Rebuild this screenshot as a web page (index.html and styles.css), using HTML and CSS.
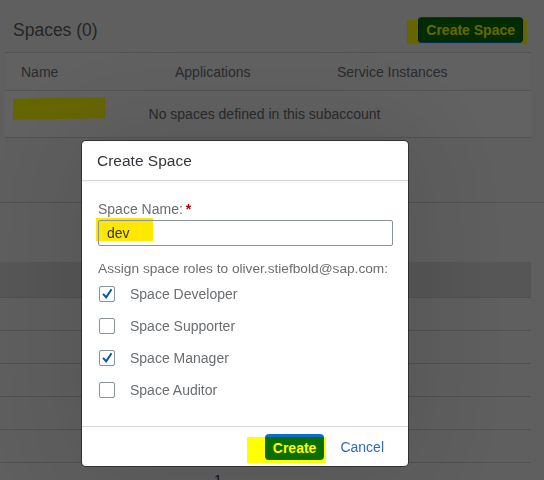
FILE: index.html
```html
<!DOCTYPE html>
<html lang="en">
<head>
<meta charset="utf-8">
<title>Spaces</title>
<link rel="stylesheet" href="styles.css">
</head>
<body>
<div class="page">
  <header class="page-head">
    <h1 class="page-title">Spaces (0)</h1>
    <span class="marked marked-top">
      <button class="btn-create-space" type="button">Create Space</button>
    </span>
  </header>

  <table class="spaces">
    <colgroup>
      <col class="c-name"><col class="c-apps"><col class="c-svc">
    </colgroup>
    <thead>
      <tr><th>Name</th><th>Applications</th><th>Service Instances</th></tr>
    </thead>
    <tbody>
      <tr><td class="no-data" colspan="3"><span class="row-mark"></span>No spaces defined in this subaccount</td></tr>
    </tbody>
  </table>

  <div class="section-gap"></div>

  <div class="list2">
    <div class="list2-head"></div>
    <div class="list2-row"></div>
    <div class="list2-row"></div>
    <div class="list2-row"></div>
    <div class="list2-row"></div>
    <div class="list2-row"></div>
  </div>
  <div class="pager">1</div>
</div>

<div class="block-layer"></div>

<div class="dialog" role="dialog" aria-labelledby="dlg-title">
  <div class="dialog-head"><h2 id="dlg-title">Create Space</h2></div>
  <div class="dialog-body">
    <label class="field-label" for="space-name">Space Name:<span class="req">*</span></label>
    <div class="input-wrap">
      <span class="input-mark"></span>
      <input id="space-name" class="input" type="text" value="dev">
    </div>
    <p class="roles-label">Assign space roles to oliver.stiefbold@sap.com:</p>
    <ul class="roles">
      <li class="role"><span class="cb checked"><svg viewBox="0 0 16 16"><polyline points="3.5,7.8 7,11.8 13.2,2.6"/></svg></span><span>Space Developer</span></li>
      <li class="role"><span class="cb"></span><span>Space Supporter</span></li>
      <li class="role"><span class="cb checked"><svg viewBox="0 0 16 16"><polyline points="3.5,7.8 7,11.8 13.2,2.6"/></svg></span><span>Space Manager</span></li>
      <li class="role"><span class="cb"></span><span>Space Auditor</span></li>
    </ul>
  </div>
  <div class="dialog-foot">
    <span class="marked marked-foot">
      <button class="btn-create" type="button">Create</button>
    </span>
    <button class="btn-cancel" type="button">Cancel</button>
  </div>
</div>
</body>
</html>
```

FILE: styles.css
```css
* { box-sizing: border-box; }

html, body {
  margin: 0;
  padding: 0;
}

body {
  width: 544px;
  height: 480px;
  overflow: hidden;
  background: #eeeeee;
  font-family: "Liberation Sans", Arial, sans-serif;
  font-size: 14px;
  color: #32363a;
}

.page {
  width: 544px;
}

/* ---------- page header ---------- */
.page-head {
  height: 52px;
  padding: 8px 21px 0 13px;
  display: flex;
  align-items: center;
  justify-content: space-between;
}

.page-title {
  margin: 0;
  font-size: 17.5px;
  font-weight: normal;
  color: #5c5e60;
  line-height: 22px;
}

.marked {
  position: relative;
  z-index: 0;
  display: inline-flex;
}

.marked::before {
  content: "";
  position: absolute;
  z-index: -1;
  background: #ffff00;
}

.marked-top::before {
  left: -11px;
  right: -4px;
  top: 3px;
  bottom: -1px;
}

.btn-create-space {
  height: 26px;
  padding: 0 7px;
  border: 1px solid #0a6ed1;
  border-left-color: #0a4a20;
  border-right-color: #0a4a20;
  border-radius: 4px;
  background: #006f00;
  color: #ffff00;
  font-family: inherit;
  font-size: 14px;
  font-weight: bold;
  line-height: 24px;
}

/* ---------- spaces table ---------- */
.spaces {
  margin-left: 5px;
  width: 526px;
  border-collapse: collapse;
  table-layout: fixed;
}

.c-name { width: 154px; }
.c-apps { width: 162px; }
.c-svc { width: 210px; }

.spaces th {
  height: 38px;
  padding: 0 0 0 16px;
  text-align: left;
  font-weight: normal;
  color: #6a6d70;
  background: #f2f2f2;
  border-top: 1px solid #cfcfcf;
  border-bottom: 1px solid #d4d4d4;
}

.spaces td {
  height: 47px;
  border-bottom: 1px solid #cfcfcf;
  background: #f4f4f4;
}

.no-data {
  position: relative;
  text-align: center;
  padding: 0 7px 0 0;
  color: #6a6d70;
}

.row-mark {
  position: absolute;
  left: 8px;
  top: 7px;
  width: 92px;
  height: 21px;
  background: #ffff00;
  transform: skewY(-1deg);
}

.section-gap {
  height: 65px;
  border-bottom: 1px solid #cacaca;
}

/* ---------- lower list ---------- */
.list2 {
  margin-top: 59px;
  width: 531px;
}

.list2-head {
  height: 36px;
  background: #d8d8d8;
  border-bottom: 1px solid #c8c8c8;
}

.list2-row {
  height: 33px;
  border-bottom: 1px solid #cbcbcb;
}

.pager {
  padding: 9px 0 0 214px;
  line-height: 16px;
  color: #32363a;
}

/* ---------- block layer ---------- */
.block-layer {
  position: fixed;
  inset: 0;
  background: rgba(0, 0, 0, 0.6);
}

/* ---------- dialog ---------- */
.dialog {
  position: fixed;
  left: 82px;
  top: 141px;
  width: 326px;
  background: #ffffff;
  border-radius: 4px;
  box-shadow: 0 0 0 1px rgba(0, 0, 0, 0.45), 0 0 110px 20px rgba(0, 0, 0, 0.12);
  overflow: hidden;
}

.dialog-head {
  height: 40px;
  padding: 0 15px;
  display: flex;
  align-items: center;
  border-bottom: 1px solid #d9d9d9;
  box-shadow: 0 1px 2px rgba(0, 0, 0, 0.06);
}

.dialog-head h2 {
  margin: 0;
  font-size: 15.5px;
  font-weight: normal;
  color: #32363a;
  line-height: 20px;
}

.dialog-body {
  padding: 19px 15px 20px 16px;
}

.field-label {
  display: block;
  line-height: 18px;
  color: #6a6d70;
}

.req {
  color: #bb0000;
  font-weight: bold;
  margin-left: 3px;
}

.input-wrap {
  position: relative;
  z-index: 0;
  margin-top: 2px;
}

.input {
  display: block;
  width: 100%;
  height: 26px;
  padding: 0 8px;
  border: 1px solid #89919a;
  border-radius: 2px;
  background: transparent;
  font-family: inherit;
  font-size: 14px;
  color: #32363a;
}

.input-mark {
  position: absolute;
  z-index: -1;
  left: -2px;
  top: -2px;
  width: 57px;
  height: 23px;
  background: #ffe800;
}

.roles-label {
  margin: 14px 0 0;
  line-height: 18px;
  font-size: 13.7px;
  white-space: nowrap;
  color: #6a6d70;
}

.roles {
  list-style: none;
  margin: 0;
  padding: 0;
}

.role {
  height: 32px;
  display: flex;
  align-items: center;
  gap: 15px;
  color: #6a6d70;
}

.cb {
  width: 16px;
  height: 16px;
  margin-left: 1px;
  border: 1px solid #89919a;
  border-radius: 2px;
  background: #ffffff;
  display: inline-flex;
}

.cb svg {
  width: 14px;
  height: 14px;
  fill: none;
  stroke: #0854a0;
  stroke-width: 2.2;
}

/* ---------- dialog footer ---------- */
.dialog-foot {
  height: 40px;
  border-top: 1px solid #d9d9d9;
  padding: 0 16px 0 0;
  display: flex;
  align-items: center;
  justify-content: flex-end;
  gap: 8px;
}

.marked-foot::before {
  left: -18px;
  right: -2px;
  top: 3px;
  bottom: -3px;
}

.btn-create {
  height: 26px;
  padding: 0 8px;
  border: none;
  border-top: 3px solid #0a6ed1;
  border-radius: 4px;
  background: #0a6e00;
  color: #ffff00;
  font-family: inherit;
  font-size: 14px;
  font-weight: bold;
  line-height: 20px;
}

.btn-cancel {
  height: 26px;
  padding: 0 8px;
  border: none;
  background: transparent;
  color: #2a6bc2;
  font-family: inherit;
  font-size: 14px;
}
```
